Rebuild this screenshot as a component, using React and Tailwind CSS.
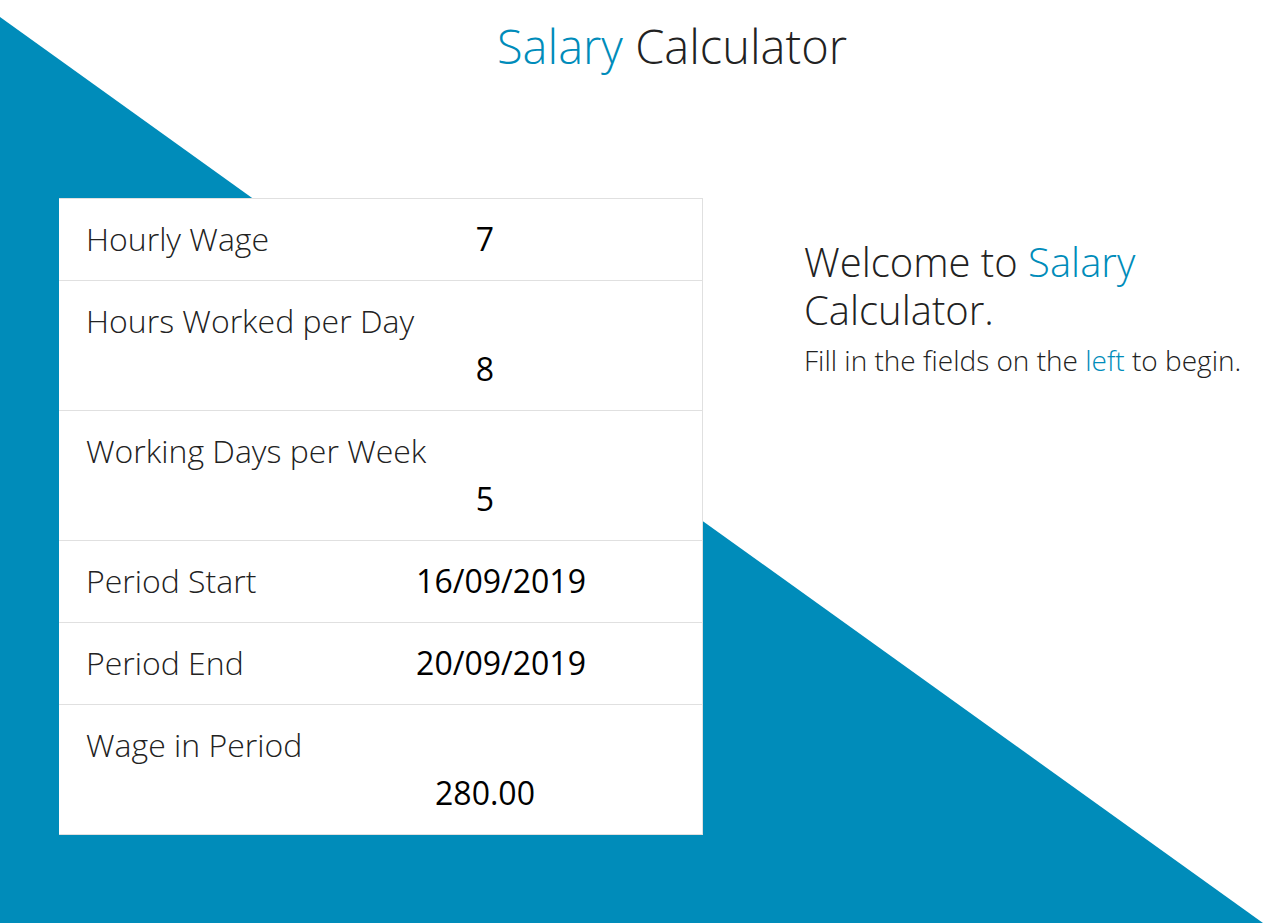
import React from "react";

const rows = [
  { label: "Hourly Wage", value: "7", stacked: false },
  { label: "Hours Worked per Day", value: "8", stacked: true },
  { label: "Working Days per Week", value: "5", stacked: true },
  { label: "Period Start", value: "16/09/2019", stacked: false, date: true },
  { label: "Period End", value: "20/09/2019", stacked: false, date: true },
  { label: "Wage in Period", value: "280.00", stacked: true },
];

export default function App() {
  return (
    <div
      className="relative w-full h-[923px] overflow-hidden bg-white text-[#222222]"
      style={{ fontFamily: '"Open Sans", "Noto Sans", sans-serif' }}
    >
      <svg
        className="absolute inset-0 w-full h-full"
        viewBox="0 0 1282 923"
        preserveAspectRatio="none"
        aria-hidden="true"
      >
        <polygon points="0,17 1263,923 0,923" fill="#008cba" />
      </svg>

      <div className="relative flex flex-col">
        <h1 className="ml-[62px] pt-[14px] text-center text-[47px] leading-[64px] font-light">
          <span className="text-[#008cba]">Salary</span> Calculator
        </h1>

        <div className="mt-[120px] flex items-start pl-[59px]">
          <div className="w-[644px] bg-white border-t border-r border-[#e0e0e0]">
            {rows.map((r) => (
              <div
                key={r.label}
                className="flex flex-wrap items-center px-[27px] pt-[16px] pb-[17px] border-b border-[#e0e0e0]"
              >
                <div
                  className={`text-[32px] leading-[48px] font-light ${
                    r.stacked ? "w-full" : ""
                  }`}
                >
                  {r.label}
                </div>
                <div
                  className={`ml-auto w-[380px] text-center text-[32px] leading-[48px] text-black ${
                    r.date ? "pl-[32px]" : ""
                  }`}
                >
                  {r.value}
                </div>
              </div>
            ))}
          </div>

          <div className="ml-[101px] mt-[40px] font-light">
            <div className="text-[40px] leading-[48px]">
              Welcome to <span className="text-[#008cba]">Salary</span>
              <br />
              Calculator.
            </div>
            <div className="text-[28px] leading-[44px] mt-[4px]">
              Fill in the fields on the{" "}
              <span className="text-[#008cba]">left</span> to begin.
            </div>
          </div>
        </div>
      </div>
    </div>
  );
}
